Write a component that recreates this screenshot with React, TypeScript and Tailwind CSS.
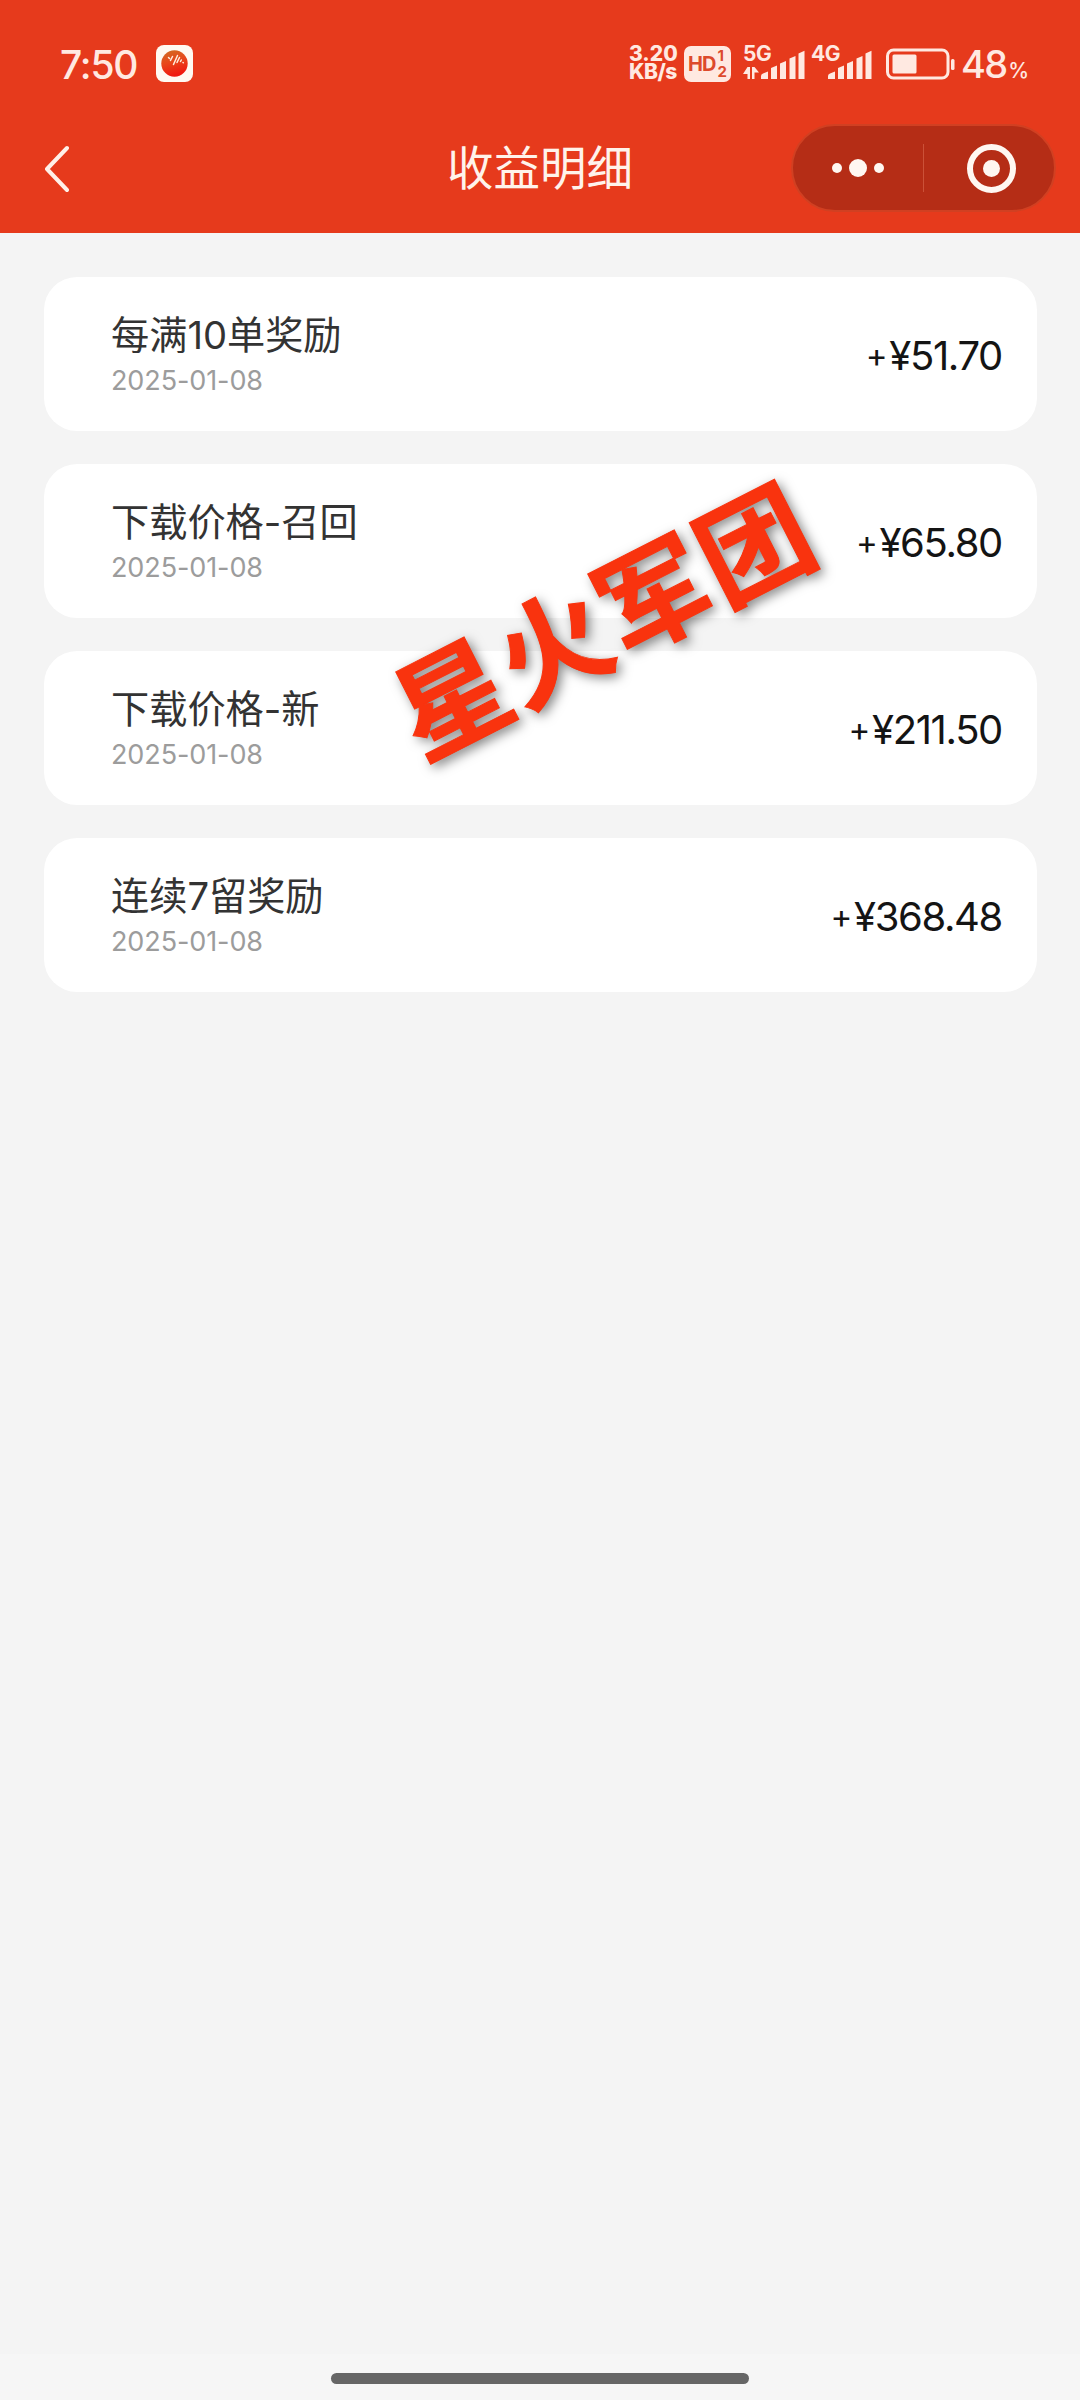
type Earning = {
  title: string;
  date: string;
  amount: string;
};

const EARNINGS: Earning[] = [
  {title: "每满10单奖励", date: "2025-01-08", amount: "¥51.70"},
  {title: "下载价格-召回", date: "2025-01-08", amount: "¥65.80"},
  {title: "下载价格-新", date: "2025-01-08", amount: "¥211.50"},
  {title: "连续7留奖励", date: "2025-01-08", amount: "¥368.48"}
];

function AppBadge() {
  return (
    <svg viewBox="0 0 37 37" className="ml-[20px] h-[37px] w-[37px]">
      <defs>
        <linearGradient id="ball" x1="0" y1="0" x2="0.3" y2="1">
          <stop offset="0" stopColor="#cf6f22" />
          <stop offset="0.5" stopColor="#e8481a" />
          <stop offset="1" stopColor="#f01a10" />
        </linearGradient>
      </defs>
      <rect width="37" height="37" rx="8" fill="#fffaf2" />
      <circle cx="18.5" cy="18.5" r="13.2" fill="url(#ball)" />
      <path
        d="M12.500 12.500l1 1M14.500 15.500l2-4M17.500 19.500l4-9M21 17.500l2.500-5M24.500 16.500l.8-1.500M27 17.500l.3.300"
        stroke="#ffeede"
        strokeWidth="1.500"
        strokeLinecap="round"
        fill="none"
      />
    </svg>
  );
}

function SignalBars({className}: {className: string}) {
  return (
    <svg viewBox="0 0 44 30" className={className} fill="#ffe9e1">
      <path d="M0 29v-3q0-2 2-2.500l5-2V29z" />
      <path d="M10 29V18l6-2.500V29z" />
      <path d="M19 29V13.500l6-2.500V29z" />
      <path d="M28.500 29V8.500l6-2.500V29z" />
      <path d="M37.500 29V3.500l6-2.700V29z" />
    </svg>
  );
}

function StatusBar() {
  return (
    <div className="flex h-[104px] items-start pl-[60px] pt-[45px] text-[#ffe9e1]">
      <div className="flex w-[76px] shrink-0 text-[39px] font-medium leading-[39px] tracking-[-1.2px]">
        7:50
      </div>
      <AppBadge />

      <div className="ml-[436px] w-[54px] shrink-0 text-[21px] font-extrabold leading-[18px]">
        <div className="whitespace-nowrap">3.20</div>
        <div className="whitespace-nowrap tracking-[-0.5px]">KB/s</div>
      </div>
      <div className="ml-[1px] mt-[1px] flex h-[36px] w-[47px] shrink-0 items-center rounded-[7px] bg-[#ffe9e1] pl-[4px] font-bold text-[#dd4a2c]">
        <span className="text-[20px] tracking-[-1px]">HD</span>
        <span className="ml-[2px] flex flex-col text-[15px] leading-[16px]">
          <span>1</span>
          <span>2</span>
        </span>
      </div>

      <div className="ml-[12px] flex h-[36px] w-[62px] shrink-0 flex-col text-[21px] font-bold leading-[18px]">
        <span className="tracking-[-0.5px]">5G</span>
        <svg viewBox="0 0 16 12" className="mt-[4px] h-[12px] w-[16px]" fill="#ffe9e1">
          <path d="M4.500 0h2.500v12H4.500V7H0z" />
          <path d="M9 0h2.500l4.500 5.500h-4.500V12H9z" />
        </svg>
      </div>
      <SignalBars className="-ml-[44px] mt-[5px] h-[30px] w-[44px] shrink-0" />

      <div className="ml-[6px] w-[30px] shrink-0 text-[21px] font-bold leading-[18px] tracking-[-0.5px]">4G</div>
      <SignalBars className="-ml-[13px] mt-[5px] h-[30px] w-[44px] shrink-0" />

      <svg viewBox="0 0 69 32" className="ml-[14px] mt-[3px] h-[32px] w-[69px] shrink-0" fill="none">
        <rect x="1.500" y="2" width="60.500" height="28" rx="6" stroke="#ffe9e1" strokeWidth="3" />
        <rect x="6.500" y="6.500" width="24" height="19" rx="1.500" fill="#ffe9e1" />
        <rect x="65" y="11" width="3.500" height="11" rx="1.500" fill="#ffe9e1" />
      </svg>
      <div className="ml-[6px] flex items-baseline">
        <span className="text-[38px] font-medium leading-[39px] tracking-[-1.8px]">48</span>
        <span className="ml-[2px] text-[21px] font-medium leading-[22px]">%</span>
      </div>
    </div>
  );
}

function NavBar() {
  return (
    <div className="flex h-[129px] items-start">
      <div className="flex h-[129px] w-[447px] shrink-0 pl-[43px] pt-[41px]">
        <svg viewBox="0 0 26 48" className="h-[48px] w-[26px]" fill="none">
          <path d="M24 3L4 24l20 21" stroke="#fff0e8" strokeWidth="4" strokeLinecap="round" strokeLinejoin="round" />
        </svg>
      </div>
      <h1 className="mt-[34px] w-[344px] text-[46.500px] leading-[60px] text-[#fff3eb]">收益明细</h1>
      <div className="mt-[20px] flex h-[88px] w-[265px] items-center rounded-full border-2 border-[#d14022] bg-[#b52d16]">
        <div className="flex w-[130px] items-center justify-center gap-[7px]">
          <span className="h-[10px] w-[10px] rounded-full bg-[#fff7f1]" />
          <span className="h-[18px] w-[18px] rounded-full bg-[#fff7f1]" />
          <span className="h-[10px] w-[10px] rounded-full bg-[#fff7f1]" />
        </div>
        <div className="h-[48px] w-px bg-[#cb5138]" />
        <div className="flex flex-1 items-center justify-center pl-[5px]">
          <div className="flex h-[49px] w-[49px] items-center justify-center rounded-full border-[6px] border-[#fff7f1]">
            <span className="h-[17px] w-[17px] rounded-full bg-[#fff7f1]" />
          </div>
        </div>
      </div>
    </div>
  );
}

function EarningCard({title, date, amount}: Earning) {
  return (
    <li className="flex h-[154px] items-center justify-between rounded-[33px] bg-white pl-[67px] pr-[35px]">
      <div className="mt-[4px] flex flex-col">
        <span className="text-[38.200px] leading-[48px] text-[#333]">{title}</span>
        <span className="text-[27px] leading-[43px] tracking-[-0.1px] text-[#9c9c9c]">{date}</span>
      </div>
      <span className="mt-[3px] text-[40px] leading-[48px] tracking-[-1.35px] text-[#141414]">
        <span className="mr-[3px] align-[3px] text-[33px] leading-none">+</span>
        {amount}
      </span>
    </li>
  );
}

export default function App() {
  return (
    <main className="relative flex h-[2400px] w-[1080px] flex-col overflow-hidden bg-[#f4f4f4] font-['Inter','Noto_Sans_CJK_SC',sans-serif]">
      <header className="bg-[#e63a1c]">
        <StatusBar />
        <NavBar />
      </header>

      <ul className="flex flex-1 flex-col gap-[33px] pl-[44px] pr-[43px] pt-[44px]">
        {EARNINGS.map((item) => (
          <EarningCard key={item.title} {...item} />
        ))}
      </ul>

      <div className="flex h-[46px] justify-center bg-[#f6f6f6] pt-[19px]">
        <div className="h-[11px] w-[418px] rounded-full bg-[#666]" />
      </div>

      {/* stamped over the list */}
      <div className="pointer-events-none absolute left-[378px] top-[552px] w-[452px] -rotate-[27deg] whitespace-nowrap text-center text-[112px] font-bold leading-[140px] tracking-[0.9px] text-[#f9330e] [-webkit-text-stroke:1px_#f9330e] [text-shadow:2px_5px_12px_rgba(0,0,0,0.5)]">
        星火军团
      </div>
    </main>
  );
}
